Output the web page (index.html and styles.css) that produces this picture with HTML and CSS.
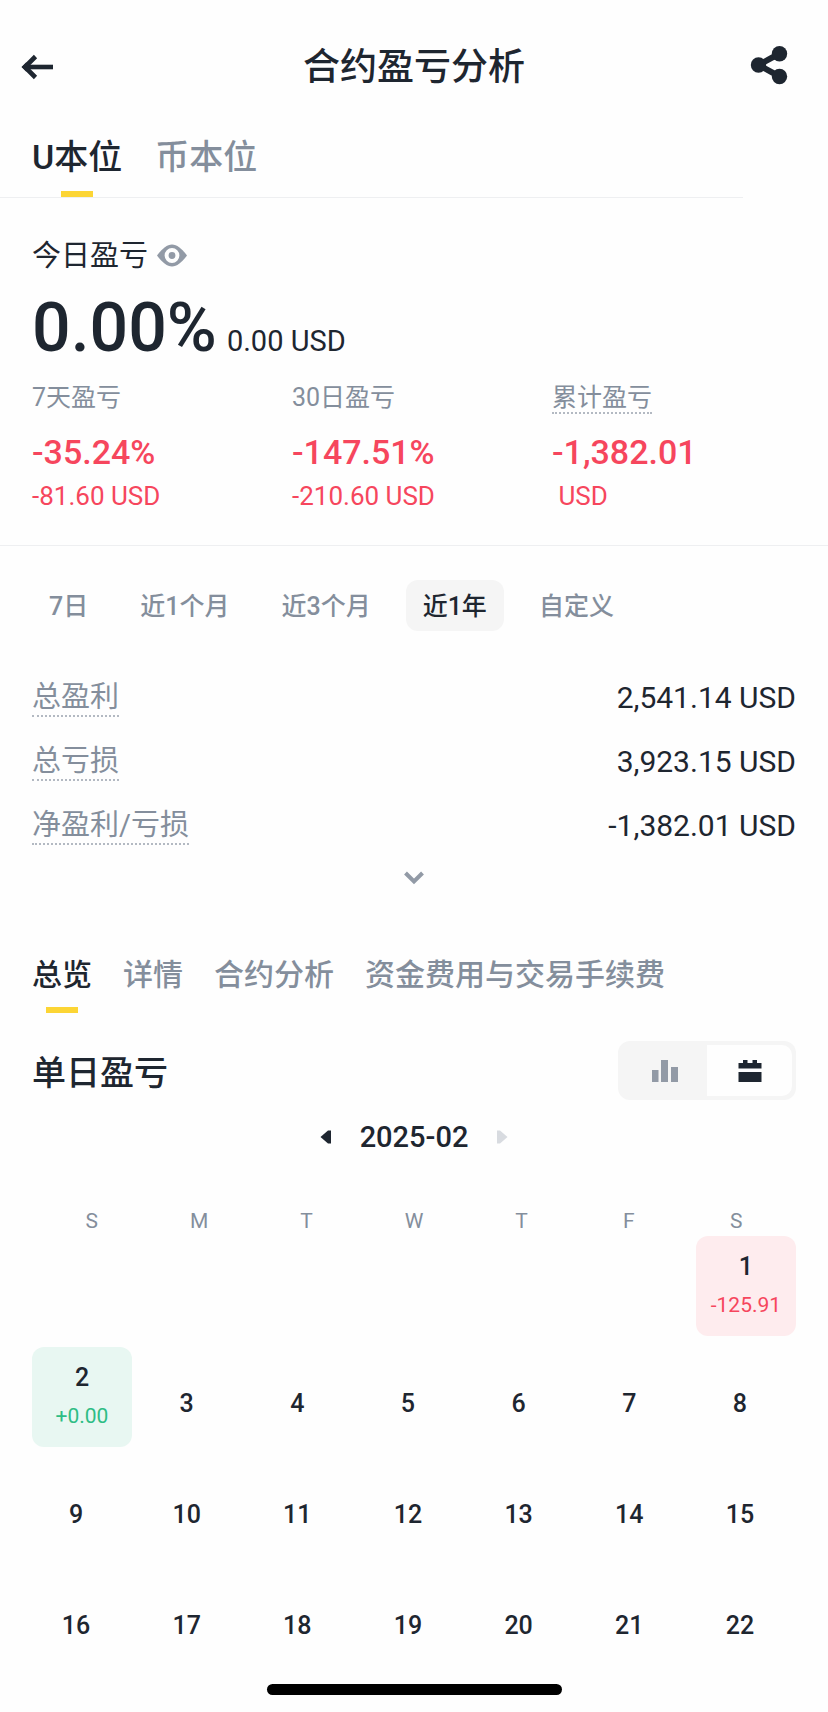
FILE: index.html
```html
<!DOCTYPE html>
<html lang="zh-CN">
<head>
<meta charset="utf-8">
<meta name="viewport" content="width=device-width, initial-scale=1">
<title>合约盈亏分析</title>
<link rel="stylesheet" href="styles.css">
</head>
<body>
<header class="header">
  <button class="icon-button" type="button" aria-label="返回">
    <svg width="34" height="28" viewBox="0 0 34 28" fill="none" stroke="currentColor" stroke-width="4.600"><path d="M33 15H6"/><path d="M15.500 4.500L5 15l10.500 10.500"/><path d="M1.500 15l5-5v10z" fill="currentColor" stroke="none"/></svg>
  </button>
  <h1 class="title">合约盈亏分析</h1>
  <button class="icon-button share" type="button" aria-label="分享">
    <svg width="38" height="40" viewBox="0 0 38 40" fill="currentColor"><path d="M29.500 7.500L8.500 19l21 11.500" fill="none" stroke="currentColor" stroke-width="6"/><circle cx="8.500" cy="19" r="7.700"/><circle cx="29.500" cy="7.700" r="7.700"/><circle cx="29.500" cy="30.500" r="7.700"/></svg>
  </button>
</header>

<nav class="tabs tabs-main">
  <button class="tab active" type="button">U本位</button>
  <button class="tab" type="button">币本位</button>
</nav>

<section class="today">
  <div class="today-label">
    <span>今日盈亏</span>
    <button class="icon-button" type="button" aria-label="隐藏金额">
      <svg class="muted" width="32" height="24" viewBox="0 0 32 24"><path d="M1 11.500C7 4 11 0.500 16 0.500s9 3.500 15 11c-6 7.500-10 11-15 11S7 19 1 11.500z" fill="currentColor"/><circle cx="16" cy="11.500" r="5.400" fill="currentColor" stroke="#fefefe" stroke-width="4"/></svg>
    </button>
  </div>
  <div class="today-value">
    <strong class="percent">0.00%</strong>
    <span class="amount">0.00 USD</span>
  </div>
  <div class="stats">
    <div class="stat"><span class="stat-label">7天盈亏</span><strong class="stat-value">-35.24%</strong><span class="stat-sub">-81.60 USD</span></div>
    <div class="stat"><span class="stat-label">30日盈亏</span><strong class="stat-value">-147.51%</strong><span class="stat-sub">-210.60 USD</span></div>
    <div class="stat"><span class="stat-label hint">累计盈亏</span><strong class="stat-value">-1,382.01</strong><span class="stat-sub">&nbsp;USD</span></div>
  </div>
</section>

<div class="filters">
  <button class="filter" type="button">7日</button>
  <button class="filter" type="button">近1个月</button>
  <button class="filter" type="button">近3个月</button>
  <button class="filter selected" type="button">近1年</button>
  <button class="filter" type="button">自定义</button>
</div>

<dl class="totals">
  <div class="total"><dt class="hint">总盈利</dt><dd>2,541.14 USD</dd></div>
  <div class="total"><dt class="hint">总亏损</dt><dd>3,923.15 USD</dd></div>
  <div class="total"><dt class="hint">净盈利/亏损</dt><dd>-1,382.01 USD</dd></div>
</dl>
<button class="expand" type="button" aria-label="展开">
  <svg width="22" height="16" viewBox="0 0 22 16" fill="none" stroke="currentColor" stroke-width="4"><path d="M2.500 3l8.500 8.500L19.500 3"/></svg>
</button>

<nav class="tabs tabs-sub">
  <button class="tab active" type="button">总览</button>
  <button class="tab" type="button">详情</button>
  <button class="tab" type="button">合约分析</button>
  <button class="tab" type="button">资金费用与交易手续费</button>
</nav>

<section class="daily">
  <div class="daily-head">
    <h2 class="daily-title">单日盈亏</h2>
    <div class="switch">
      <button class="switch-item" type="button" aria-label="图表">
        <svg width="26" height="22" viewBox="0 0 26 22" fill="currentColor"><path d="M0 10h6.500v12H0zM9 0h7v22H9zM19 7h7v15h-7z"/></svg>
      </button>
      <button class="switch-item on" type="button" aria-label="日历">
        <svg width="24" height="22" viewBox="0 0 24 22" fill="currentColor"><path d="M0.500 3H5V0h4.500v3h5V0H19v3h4.500v5.500h-23zM0.500 12h23v10h-23z"/></svg>
      </button>
    </div>
  </div>
  <div class="month">
    <button class="icon-button" type="button" aria-label="上个月">
      <svg width="12" height="14" viewBox="0 0 12 14" fill="currentColor"><path d="M0.500 7L8 0.500h3v13H8z"/></svg>
    </button>
    <span>2025-02</span>
    <button class="icon-button faint" type="button" aria-label="下个月" disabled>
      <svg width="12" height="14" viewBox="0 0 12 14" fill="currentColor"><path d="M11.500 7L4 0.500H1v13h3z"/></svg>
    </button>
  </div>
  <div class="weekdays"><span>S</span><span>M</span><span>T</span><span>W</span><span>T</span><span>F</span><span>S</span></div>
  <div class="days">
    <div class="day loss first"><span>1</span><small>-125.91</small></div>
    <div class="day gain"><span>2</span><small>+0.00</small></div>
    <div class="day">3</div>
    <div class="day">4</div>
    <div class="day">5</div>
    <div class="day">6</div>
    <div class="day">7</div>
    <div class="day">8</div>
    <div class="day">9</div>
    <div class="day">10</div>
    <div class="day">11</div>
    <div class="day">12</div>
    <div class="day">13</div>
    <div class="day">14</div>
    <div class="day">15</div>
    <div class="day">16</div>
    <div class="day">17</div>
    <div class="day">18</div>
    <div class="day">19</div>
    <div class="day">20</div>
    <div class="day">21</div>
    <div class="day">22</div>
  </div>
</section>
<div class="home-bar"></div>
</body>
</html>
```

FILE: styles.css
```css
* {
  box-sizing: border-box;
}

body {
  margin: 0;
  background: #fefefe;
  color: #1e2630;
  font-family: Roboto, "Noto Sans CJK SC", sans-serif;
  font-size: 29px;
}

button {
  padding: 0;
  border: 0;
  background: none;
  color: inherit;
  font: inherit;
  cursor: pointer;
}

svg {
  display: block;
}

.icon-button {
  flex: none;
}

.muted {
  color: #929aa6;
}

.hint {
  border-bottom: 2px dotted #b3b9c2;
}

/* Header */

.header {
  display: grid;
  grid-template-columns: 1fr auto 1fr;
  align-items: center;
  height: 96px;
  margin-bottom: 36px;
  padding: 34px 20px 0;
}

.header .icon-button {
  justify-self: start;
}

.header .share {
  justify-self: end;
  margin-right: 20px;
}

.title {
  margin: 0;
  padding-top: 4px;
  font-size: 37px;
  font-weight: 500;
  line-height: 60px;
}

/* Tabs */

.tabs {
  display: flex;
  padding-left: 32px;
  color: #848e9c;
  font-weight: 500;
  white-space: nowrap;
}

.tab {
  display: flex;
  flex-direction: column;
  align-items: center;
}

.tab.active {
  color: #1e2630;
}

.tab.active::after {
  content: "";
  width: 32px;
  height: 6px;
  background: #fcd535;
}

.tabs-main {
  gap: 33px;
  margin-right: 85px;
  border-bottom: 1px solid #eeeff1;
  font-size: 34px;
  line-height: 50px;
}

.tabs-main .tab {
  gap: 9px;
}

.tabs-sub {
  gap: 31px;
  margin-top: 68px;
  font-size: 30px;
  line-height: 42px;
}

.tabs-sub .tab {
  gap: 11px;
}

/* Today */

.today {
  padding: 38px 16px 34px 32px;
  border-bottom: 1px solid #eeeff1;
}

.today-label {
  display: flex;
  align-items: center;
  gap: 8px;
  line-height: 40px;
}

.today-value {
  display: flex;
  align-items: baseline;
  gap: 10px;
  margin-top: 18px;
}

.percent {
  font-size: 68px;
  font-weight: 500;
  line-height: 68px;
}

.amount {
  line-height: 36px;
}

.stats {
  display: grid;
  grid-template-columns: repeat(3, 1fr);
  margin-top: 20px;
}

.stat {
  display: flex;
  flex-direction: column;
  align-items: flex-start;
  color: #f6465d;
}

.stat-label {
  height: 32px;
  color: #848e9c;
  font-size: 25px;
  line-height: 32px;
}

.stat-value {
  margin-top: 18px;
  font-size: 34px;
  font-weight: 500;
  line-height: 40px;
}

.stat-sub {
  margin-top: 9px;
  font-size: 26px;
  line-height: 30px;
}

/* Range filters */

.filters {
  display: flex;
  gap: 18px;
  margin-top: 34px;
  padding-left: 32px;
  color: #848e9c;
  font-size: 25px;
  font-weight: 500;
  line-height: 49px;
}

.filter {
  padding: 2px 17px 0;
  border-radius: 12px;
}

.filter.selected {
  background: #f5f5f5;
  color: #1e2630;
}

/* Totals */

.totals {
  margin: 35px 0 0;
  padding: 0 32px;
}

.total {
  display: flex;
  align-items: center;
  justify-content: space-between;
  height: 64px;
  line-height: 36px;
}

.total dt {
  color: #848e9c;
}

.total dd {
  margin: 0;
  font-size: 30px;
}

.expand {
  display: block;
  margin: 12px auto 0;
  color: #929aa6;
}

/* Daily */

.daily {
  padding: 28px 32px 0;
}

.daily-head {
  display: flex;
  align-items: center;
  justify-content: space-between;
}

.daily-title {
  margin: 0;
  font-size: 34px;
  font-weight: 500;
}

.switch {
  display: flex;
  padding: 4px;
  border-radius: 12px;
  background: #f5f5f5;
}

.switch-item {
  display: flex;
  align-items: center;
  justify-content: center;
  width: 85px;
  height: 51px;
  color: #929aa6;
}

.switch-item.on {
  border-radius: 0 10px 10px 0;
  background: #fefefe;
  color: #1e2630;
}

.month {
  display: flex;
  align-items: center;
  justify-content: center;
  gap: 28px;
  margin-top: 19px;
  font-weight: 500;
  line-height: 36px;
}

.faint {
  color: #d8dbe0;
}

.weekdays {
  display: grid;
  grid-template-columns: repeat(7, 1fr);
  margin-top: 54px;
  padding: 0 6px;
  color: #848e9c;
  font-size: 21px;
  line-height: 24px;
  text-align: center;
}

.days {
  display: grid;
  grid-template-columns: repeat(7, 100px);
  justify-content: space-between;
  gap: 11px 0;
  margin-top: 3px;
  font-size: 25px;
  font-weight: 500;
}

.day {
  display: flex;
  flex-direction: column;
  align-items: center;
  justify-content: center;
  height: 100px;
  padding: 12px 12px 0 0;
  border-radius: 12px;
}

.first {
  grid-column: 7;
}

.gain,
.loss {
  gap: 8px;
  padding: 0;
  line-height: 30px;
}

.gain {
  background: #e8f7f2;
}

.loss {
  background: #feecee;
}

.day small {
  font-size: 21px;
  font-weight: 400;
}

.gain small {
  color: #2ebd85;
}

.loss small {
  color: #f6465d;
}

.home-bar {
  width: 295px;
  height: 11px;
  margin: 15px auto 17px;
  border-radius: 6px;
  background: #000;
}
```
